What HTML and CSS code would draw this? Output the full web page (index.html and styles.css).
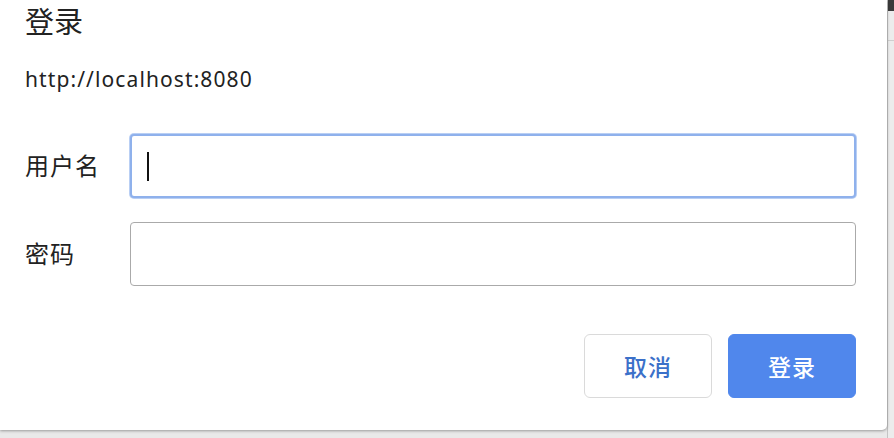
FILE: index.html
```html
<!DOCTYPE html>
<html lang="zh-CN">
<head>
<meta charset="utf-8">
<title>登录</title>
<link rel="stylesheet" href="styles.css">
</head>
<body>
<div class="screen">
  <div class="dialog">
    <h1 class="title">登录</h1>
    <div class="origin">http://localhost:8080</div>
    <div class="form">
      <label class="label" for="u">用户名</label>
      <div class="field focused"><span class="caret"></span></div>
      <label class="label" for="p">密码</label>
      <div class="field"></div>
    </div>
    <div class="actions">
      <button class="btn btn-cancel">取消</button>
      <button class="btn btn-primary">登录</button>
    </div>
  </div>
  <div class="edge">
    <div class="edge-top"></div>
    <div class="edge-line"></div>
  </div>
</div>
</body>
</html>
```
FILE: styles.css
```css
html, body {
  margin: 0;
  padding: 0;
  width: 894px;
  height: 438px;
  overflow: hidden;
  background: #e9e9e9;
  font-family: "Noto Sans", "Noto Sans CJK SC", sans-serif;
  color: #222;
}
.screen {
  display: flex;
  width: 894px;
  height: 438px;
}
.dialog {
  width: 887px;
  height: 430px;
  flex: none;
  background: #fff;
  border-radius: 0 0 5px 0;
  box-shadow: 0 1px 3px rgba(0,0,0,0.35);
  box-sizing: border-box;
  padding: 4px 31px 0 25px;
  display: flex;
  flex-direction: column;
  position: relative;
  z-index: 1;
}
.title {
  margin: 0;
  font-weight: 400;
  font-size: 29px;
  line-height: 36px;
  color: #222;
}
.origin {
  margin-top: 26px;
  font-size: 21px;
  letter-spacing: 1.1px;
  line-height: 26px;
  color: #222;
}
.form {
  margin-top: 42px;
  display: grid;
  grid-template-columns: 105px 726px;
  grid-auto-rows: 64px;
  row-gap: 24px;
  align-items: center;
}
.label {
  font-size: 24px;
  letter-spacing: 1px;
  color: #222;
  padding-bottom: 4px;
}
.field {
  height: 64px;
  box-sizing: border-box;
  border: 1px solid #aaaaaa;
  border-radius: 4px;
  background: #fff;
  display: flex;
  align-items: center;
  padding-left: 16px;
}
.field.focused {
  border: 2px solid #8fb1ec;
  box-shadow: 0 0 0 1px #b9cff4;
  padding-left: 15px;
}
.caret {
  width: 2px;
  height: 29px;
  background: #111;
}
.actions {
  margin-top: 48px;
  display: flex;
  justify-content: flex-end;
  gap: 16px;
}
.btn {
  width: 128px;
  height: 64px;
  border-radius: 6px;
  font-family: "Noto Sans CJK SC", sans-serif;
  font-size: 23px;
  font-weight: 500;
  letter-spacing: 1px;
  cursor: pointer;
  padding: 0;
}
.btn-cancel {
  background: #fff;
  border: 1px solid #dadada;
  color: #3b70c9;
}
.btn-primary {
  background: #5087ec;
  border: 1px solid #5087ec;
  color: #fff;
}
.edge {
  flex: 1;
  display: flex;
  flex-direction: column;
  border-left: 1px solid #c4c4c4;
  background: #ececec;
}
.edge-top {
  height: 11px;
  background: #3a3a3a;
}
.edge-line {
  margin-top: 29px;
  height: 1px;
  background: #cfcfcf;
}
```
